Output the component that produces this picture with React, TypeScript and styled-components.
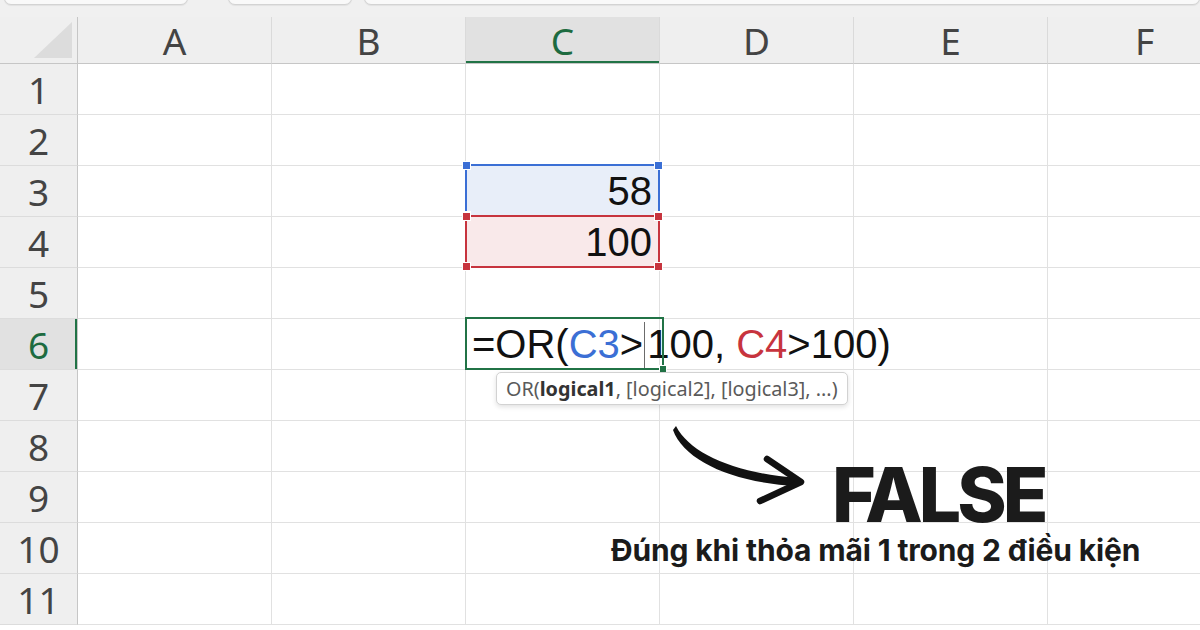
import React from "react";
import styled, {createGlobalStyle} from "styled-components";

type Tone = "blue" | "red";

const GlobalStyle = createGlobalStyle`
  html, body {
    margin: 0;
    padding: 0;
    background: #fff;
  }
  body {
    width: 1200px;
    height: 630px;
    overflow: hidden;
    font-family: "Liberation Sans", Arial, sans-serif;
  }
`;

const COLUMNS = ["A", "B", "C", "D", "E", "F"];
const ROW_COUNT = 11;
const ACTIVE_COL = "C";
const ACTIVE_ROW = 6;

const VALUES: Record<string, {value: string, tone: Tone}> = {
    C3: {value: "58", tone: "blue"},
    C4: {value: "100", tone: "red"},
};

const TONE_LINE: Record<Tone, string> = {blue: "#3b6fd5", red: "#c7343e"};
const TONE_FILL: Record<Tone, string> = {blue: "#e8eef9", red: "#f9e9ea"};

const Window = styled.div`
  position: relative;
  width: 1200px;
  height: 630px;
  overflow: hidden;
  background: #fff;
`;

const TabStrip = styled.div`
  display: flex;
  height: 17px;
  background: #f0f0f0;
  overflow: hidden;
`;

const Tab = styled.div<{ $offset: number, $width?: number }>`
  margin-left: ${p => p.$offset}px;
  margin-top: -10px;
  height: 13px;
  width: ${p => p.$width ? `${p.$width}px` : "auto"};
  flex: ${p => p.$width ? "none" : "1"};
  background: #f9f9f9;
  border: 1px solid #d3d3d3;
  border-radius: 0 0 7px 7px;
  box-shadow: 0 1px 1px rgba(0, 0, 0, 0.06);
`;

const Sheet = styled.div`
  display: grid;
  grid-template-columns: 78px repeat(6, 194px);
  grid-template-rows: 47px;
  grid-auto-rows: 51px;
`;

const CornerCell = styled.div`
  display: flex;
  align-items: flex-end;
  justify-content: flex-end;
  padding: 0 5px 5px 0;
  background: #efefef;
  border-right: 1px solid #c6c6c6;
  border-bottom: 1px solid #c6c6c6;
`;

const CornerTriangle = styled.div`
  width: 38px;
  height: 36px;
  background: #dcdcdc;
  clip-path: polygon(100% 0, 100% 100%, 0 100%);
`;

const HeaderText = styled.div<{ $active?: boolean }>`
  display: flex;
  align-items: center;
  justify-content: center;
  font-family: "Noto Sans", "Open Sans", sans-serif;
  font-size: 37px;
  color: ${p => p.$active ? "#1d6b40" : "#444"};
  background: ${p => p.$active ? "#e1e1e1" : "#efefef"};
`;

const ColHeader = styled(HeaderText)`
  padding-top: 1px;
  border-right: 1px solid #dadada;
  border-bottom: 1px solid #c6c6c6;
  box-shadow: ${p => p.$active ? "inset 0 -2px 0 #217346" : "none"};
`;

const RowHeader = styled(HeaderText)`
  border-right: 1px solid #c6c6c6;
  border-bottom: 1px solid #dcdcdc;
  box-shadow: ${p => p.$active ? "inset -2px 0 0 #217346" : "none"};
`;

const Cell = styled.div<{ $tone?: Tone, $editing?: boolean }>`
  position: relative;
  z-index: ${p => p.$editing ? 3 : p.$tone ? 1 : 0};
  display: flex;
  align-items: center;
  justify-content: ${p => p.$editing ? "flex-start" : "flex-end"};
  padding: 0 7px 0 6px;
  font-size: 40px;
  color: #111;
  white-space: nowrap;
  background: ${p => p.$tone ? TONE_FILL[p.$tone] : "#fff"};
  border-right: 1px solid #e1e1e1;
  border-bottom: 1px solid #e1e1e1;
`;

const RangeFrame = styled.div<{ $color: string }>`
  position: absolute;
  top: -2px;
  left: -1px;
  right: -1px;
  bottom: -1px;
  border: 2px solid ${p => p.$color};
  pointer-events: none;
`;

const Handle = styled.span<{ $color: string, $v: "top" | "bottom", $h: "left" | "right" }>`
  position: absolute;
  ${p => p.$v}: -5px;
  ${p => p.$h}: -5px;
  width: 7px;
  height: 7px;
  background: ${p => p.$color};
  border: 1px solid #fff;
`;

const EditFrame = styled.div`
  position: absolute;
  top: -2px;
  left: -1px;
  width: 195px;
  bottom: -1px;
  border: 2px solid #217346;
  pointer-events: none;
`;

const FillHandle = styled.span`
  position: absolute;
  right: -5px;
  bottom: -5px;
  width: 6px;
  height: 6px;
  background: #217346;
  border: 1px solid #fff;
`;

const Formula = styled.span`
  display: inline-flex;
  align-items: center;
  color: #111;
`;

const Ref = styled.span<{ $tone: Tone }>`
  color: ${p => TONE_LINE[p.$tone]};
`;

const Caret = styled.span`
  display: inline-block;
  width: 1px;
  height: 46px;
  margin: 2px 2px 0 1px;
  background: #6b6b6b;
`;

const Tooltip = styled.div`
  position: absolute;
  top: calc(100% + 3px);
  left: 30px;
  display: flex;
  align-items: center;
  height: 31px;
  padding: 0 9px;
  font-family: "Noto Sans", "Open Sans", sans-serif;
  font-size: 19.8px;
  color: #5a5a5a;
  background: #fff;
  border: 1px solid #d2d2d2;
  border-radius: 5px;
  box-shadow: 0 2px 5px rgba(0, 0, 0, 0.12);
  b {
    color: #333;
    font-weight: 700;
  }
`;

const Annotation = styled.div`
  position: absolute;
  left: 611px;
  top: 420px;
  z-index: 4;
  display: flex;
  flex-direction: column;
  font-family: Inter, "Noto Sans", sans-serif;
  color: #1b1b1b;
`;

const ResultRow = styled.div`
  display: flex;
  align-items: flex-start;
`;

const ArrowMark = styled.svg`
  margin-left: 55px;
  flex: none;
`;

const Result = styled.div`
  margin: 37px 0 0 21px;
  font-size: 75px;
  font-weight: 800;
  line-height: 1;
  letter-spacing: -4px;
`;

const Caption = styled.div`
  margin-top: 2px;
  font-size: 30px;
  font-weight: 700;
  line-height: 1.1;
  letter-spacing: -0.15px;
`;

function CurvedArrow() {
    return (
        <ArrowMark width="145" height="90" viewBox="0 0 145 90">
            <path d="M10 6 C 24 34, 70 53, 131 58 L 131 66 C 68 63, 18 41, 7 10 Z" fill="#111"/>
            <path d="M101 39 L 135 62 L 94 81" fill="none" stroke="#111" strokeWidth="6.5"
                  strokeLinecap="round" strokeLinejoin="round"/>
        </ArrowMark>
    );
}

function Corners({color}: { color: string }) {
    return (<>
        <Handle $color={color} $v="top" $h="left"/>
        <Handle $color={color} $v="top" $h="right"/>
        <Handle $color={color} $v="bottom" $h="left"/>
        <Handle $color={color} $v="bottom" $h="right"/>
    </>);
}

function SheetCell({col, row}: { col: string, row: number }) {
    const key = col + row;
    const data = VALUES[key];

    if (col === ACTIVE_COL && row === ACTIVE_ROW) {
        return (
            <Cell $editing>
                <Formula>
                    =OR(<Ref $tone="blue">C3</Ref>&gt;<Caret/>100,&nbsp;<Ref $tone="red">C4</Ref>&gt;100)
                </Formula>
                <EditFrame>
                    <FillHandle/>
                </EditFrame>
                <Tooltip>OR(<b>logical1</b>, [logical2], [logical3], ...)</Tooltip>
            </Cell>
        );
    }

    if (data) {
        return (
            <Cell $tone={data.tone}>
                {data.value}
                <RangeFrame $color={TONE_LINE[data.tone]}>
                    <Corners color={TONE_LINE[data.tone]}/>
                </RangeFrame>
            </Cell>
        );
    }

    return <Cell/>;
}

const App = () => {
    const rows = Array.from({length: ROW_COUNT}, (_, i) => i + 1);

    return (<Window>
        <GlobalStyle/>
        <TabStrip>
            <Tab $offset={4} $width={182}/>
            <Tab $offset={40} $width={122}/>
            <Tab $offset={12}/>
        </TabStrip>
        <Sheet>
            <CornerCell><CornerTriangle/></CornerCell>
            {COLUMNS.map(col => <ColHeader key={col} $active={col === ACTIVE_COL}>{col}</ColHeader>)}
            {rows.map(row => (
                <React.Fragment key={row}>
                    <RowHeader $active={row === ACTIVE_ROW}>{row}</RowHeader>
                    {COLUMNS.map(col => <SheetCell key={col + row} col={col} row={row}/>)}
                </React.Fragment>
            ))}
        </Sheet>
        <Annotation>
            <ResultRow>
                <CurvedArrow/>
                <Result>FALSE</Result>
            </ResultRow>
            <Caption>Đúng khi thỏa mãi 1 trong 2 điều kiện</Caption>
        </Annotation>
    </Window>);
}

export default App;
